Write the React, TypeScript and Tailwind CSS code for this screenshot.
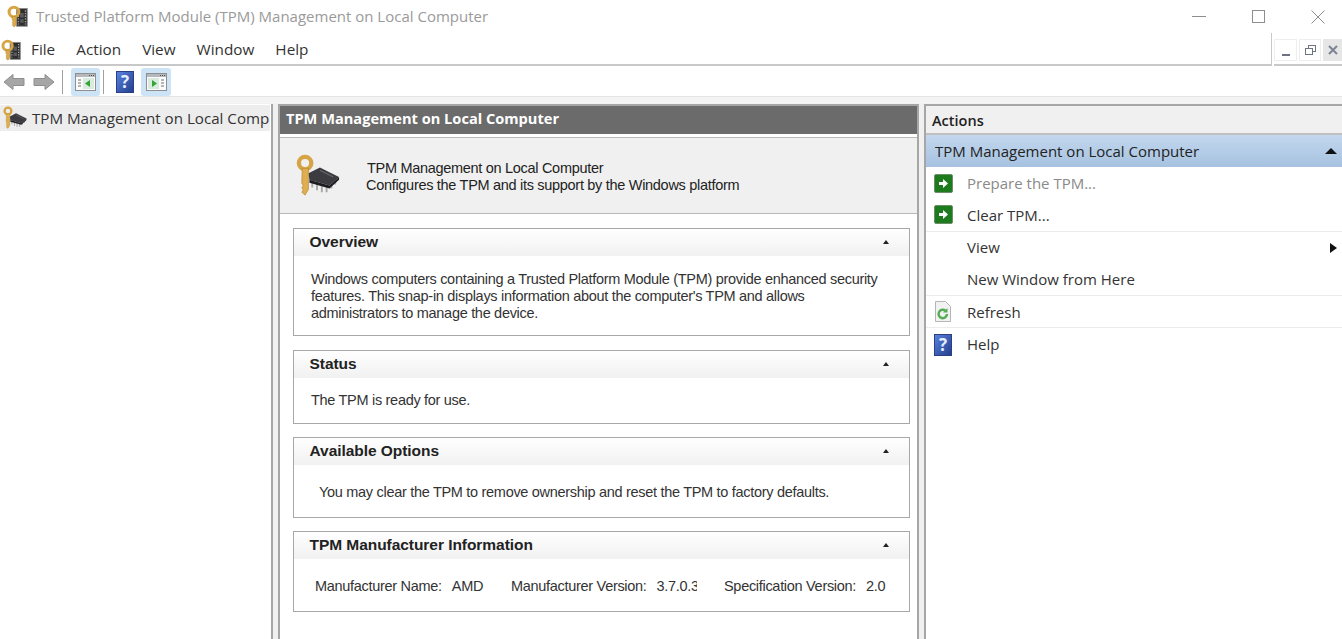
import { ReactNode } from 'react';

// key in front of the dark film strip (title bar and menu bar)
function TitleIcon({ size = 24 }: { size?: number }) {
  return (
    <svg width={size} height={size} viewBox="0 0 24 26" className="shrink-0">
      <rect x="11" y="4" width="12" height="20" fill="#2f2f2f" stroke="#8b8b8b" />
      <path d="M13 6v16M21 6v16" stroke="#a5a5a5" strokeWidth="1.500" strokeDasharray="1.500 1.500" />
      <path d="M15 9h4v5h-4zM15 16h4v4h-4z" fill="#5b5b5b" />
      <circle cx="8" cy="8" r="5.500" fill="none" stroke="#d8a544" strokeWidth="3.500" />
      <path d="M6 13h4.500v9l-2 3-2.500-2 1-1.500-1-1.500 1-1.500-1-1.500z" fill="#dcaa4a" stroke="#a97f2c" strokeWidth="0.500" />
    </svg>
  );
}

// key in front of the chip (tree row and description)
function ChipKeyIcon({ size = 24 }: { size?: number }) {
  return (
    <svg width={size} height={size} viewBox="0 0 46 46" className="shrink-0">
      <path d="M17 27v8M22 29v9M27 31v9M32 33v7M37 31v5M41 28v4" stroke="#a8a8a8" strokeWidth="2" />
      <path d="M13 20 L25 14 L45 24 L35 33 L14 27 Z" fill="#3b3b40" />
      <path d="M14 27 L35 33 L45 24 L45 27 L35 36 L14 30 Z" fill="#1e1e22" />
      <path d="M25 17 L39 24" stroke="#66666c" strokeWidth="1.200" />
      <circle cx="9.500" cy="9.500" r="6.500" fill="none" stroke="#d7a445" strokeWidth="4.500" />
      <path d="M6.500 15h6.500v22l-3.500 6-3.500-3 1.500-2.500-1.500-2 1.500-2.500-1.500-2.500z" fill="#dfae4e" stroke="#aa7f2b" strokeWidth="0.600" />
    </svg>
  );
}

function HelpIcon({ className }: { className?: string }) {
  return (
    <div className={`flex items-center justify-center border border-[#2a3f85] bg-gradient-to-br from-[#5a82dc] to-[#24408f] font-bold leading-none text-[#e8eefc] ${className}`}>
      ?
    </div>
  );
}

function ArrowBox() {
  return (
    <div className="flex h-[19px] w-[19px] items-center justify-center rounded-[2px] border border-[#6b8f6b] bg-[#1d7a1d]">
      <svg width="11" height="11" viewBox="0 0 11 11">
        <path d="M1 4h4V1l5 4.500-5 4.500V7H1z" fill="#fff" />
      </svg>
    </div>
  );
}

function PaneIcon({ dir }: { dir: 'left' | 'right' }) {
  return (
    <svg width="21" height="21" viewBox="0 0 21 21">
      <rect x=".5" y="2.500" width="20" height="17" fill="#fbfbfb" stroke="#8f8f8f" />
      <rect x="1" y="3" width="19" height="3" fill="#b5b8bd" />
      <path d="M14 4.500h1M16 4.500h1M18 4.500h1" stroke="#555" />
      {dir === 'left' ? (
        <>
          <path d="M3 9h3M3 12h3M3 15h3" stroke="#707070" />
          <rect x="8" y="7" width="11" height="11" fill="#d9eadf" />
          <path d="M15 9v7l-5-3.500z" fill="#35a335" />
        </>
      ) : (
        <>
          <path d="M15 9h3M15 12h3M15 15h3" stroke="#707070" />
          <rect x="2" y="7" width="11" height="11" fill="#d9eadf" />
          <path d="M6 9v7l5-3.500z" fill="#35a335" />
        </>
      )}
    </svg>
  );
}

function NavArrow({ flip }: { flip?: boolean }) {
  return (
    <svg width="22" height="18" viewBox="0 0 22 18" className={flip ? '-scale-x-100' : ''}>
      <path d="M1 9 L10 1.500 V5.500 H21 V12.500 H10 V16.500 Z" fill="#a6a6a6" stroke="#8f8f8f" />
    </svg>
  );
}

function Card({ title, children, className }: { title: string; children: ReactNode; className?: string }) {
  return (
    <section className={`border border-[#a8a8a8] bg-white ${className}`}>
      <div className="flex h-[27px] items-center justify-between bg-gradient-to-b from-white to-[#f1f1f1] pb-[2px] pl-[15.500px] pr-[20px]">
        <h2 className="text-[15.500px] font-bold tracking-[-0.05px] text-[#222]">{title}</h2>
        <div className="h-0 w-0 border-x-[3.500px] border-b-[4px] border-x-transparent border-b-[#222]" />
      </div>
      {children}
    </section>
  );
}

function ActionRow({ icon, label, muted, line, arrow }: { icon?: ReactNode; label: string; muted?: boolean; line?: boolean; arrow?: boolean }) {
  return (
    <div className={`flex h-[32.300px] items-center ${line ? 'border-b border-[#ececec]' : ''}`}>
      <div className="flex w-[41px] shrink-0 justify-start pl-[8px]">{icon}</div>
      <span className={`text-[15px] ${muted ? 'text-[#8a8a8a]' : 'text-[#333]'}`}>{label}</span>
      {arrow && <div className="ml-auto mr-[5px] h-0 w-0 border-y-[5.500px] border-l-[7px] border-y-transparent border-l-[#111]" />}
    </div>
  );
}

function Info({ label, value, clip, className }: { label: string; value: string; clip?: boolean; className?: string }) {
  return (
    <span className={`flex ${className}`}>
      <span>{label}</span>
      <span className={`ml-[10px] ${clip ? 'w-[40px] overflow-hidden' : ''}`}>{value}</span>
    </span>
  );
}

export default function App() {
  const menus = ['File', 'Action', 'View', 'Window', 'Help'];

  return (
    <div className="flex h-[639px] w-[1342px] flex-col overflow-hidden bg-white font-['Open_Sans','Noto_Sans',sans-serif] text-[#333]">
      {/* title bar */}
      <header className="flex h-[33px] shrink-0 items-center pl-[6px]">
        <TitleIcon size={23} />
        <span className="ml-[7px] text-[15px] text-[#9a9a9a]">Trusted Platform Module (TPM) Management on Local Computer</span>
        <div className="ml-auto flex items-center gap-[46px] pr-[17px]">
          <div className="h-px w-[14px] bg-[#8e8e8e]" />
          <div className="h-[13px] w-[13px] border border-[#8e8e8e]" />
          <svg width="14" height="14" viewBox="0 0 14 14">
            <path d="M.500.500l13 13M13.500.500l-13 13" stroke="#8e8e8e" />
          </svg>
        </div>
      </header>

      {/* menu bar */}
      <nav className="flex h-[33px] shrink-0 items-center">
        <div className="flex h-full flex-1 items-center border-b-2 border-r border-[#c8c8c8] pt-[2px]">
          <TitleIcon size={22} />
          <ul className="ml-[9px] flex gap-[21px] text-[15.300px]">
            {menus.map(m => (
              <li key={m}>{m}</li>
            ))}
          </ul>
        </div>
        <div className="ml-[2px] flex h-[calc(100%-3px)] items-center gap-[2px] self-end border-b-2 border-[#c8c8c8]">
          <div className="flex h-[22px] w-[23px] items-end justify-center border border-[#eee] pb-[4px]">
            <div className="h-[2px] w-[8px] bg-[#6d7480]" />
          </div>
          <div className="flex h-[22px] w-[22px] items-center justify-center border border-[#eee]">
            <svg width="11" height="11" viewBox="0 0 11 11" fill="none" stroke="#6d7480">
              <rect x="3.500" y=".500" width="7" height="6" />
              <rect x=".500" y="3.500" width="7" height="6" fill="#fff" />
            </svg>
          </div>
          <div className="flex h-[22px] w-[19px] items-center justify-center bg-[#e6e6e6]">
            <svg width="10" height="10" viewBox="0 0 10 10">
              <path d="M1 1l8 8M9 1l-8 8" stroke="#7b8494" strokeWidth="2" />
            </svg>
          </div>
        </div>
      </nav>

      {/* toolbar */}
      <div className="flex h-[30px] shrink-0 items-center pl-[3px] pt-[1px]">
        <NavArrow />
        <div className="ml-[8px]">
          <NavArrow flip />
        </div>
        <div className="ml-[7px] h-[24px] w-px bg-[#a0a0a0]" />
        <div className="ml-[8px] flex h-[28px] w-[29px] items-center justify-center rounded-[3px] bg-[#cde4f7]">
          <PaneIcon dir="left" />
        </div>
        <div className="ml-[3px] h-[24px] w-px bg-[#a0a0a0]" />
        <HelpIcon className="ml-[12px] h-[22px] w-[18px] text-[17px]" />
        <div className="ml-[7px] flex h-[28px] w-[30px] items-center justify-center rounded-[3px] bg-[#cde4f7]">
          <PaneIcon dir="right" />
        </div>
      </div>

      <div className="h-[8px] shrink-0 border-t border-[#e4e4e4] bg-[#f3f3f3]" />

      {/* panes */}
      <main className="flex min-h-0 flex-1 bg-[#f0f0f0]">
        <aside className="w-[273px] shrink-0 overflow-hidden border-r-2 border-[#a6a6a6] bg-white pt-[1px]">
          <div className="flex h-[26px] w-[270px] items-center gap-[5px] overflow-hidden whitespace-nowrap bg-[#ededed] pl-[3px] text-[15.150px]">
            <ChipKeyIcon size={24} />
            <span>TPM Management on Local Comp</span>
          </div>
        </aside>

        <div className="ml-[5px] flex w-[641px] shrink-0 flex-col border-x-2 border-t-2 border-[#a6a6a6] bg-white">
          <div className="flex h-[28px] shrink-0 items-center bg-[#6b6b6b] pb-[2px] pl-[6px] text-[14.600px] font-bold text-white">
            TPM Management on Local Computer
          </div>
          <div className="mt-[3px] flex h-[77px] shrink-0 items-center border-y border-[#b8b8b8] bg-[#f0f0f0] pl-[16px] font-['Liberation_Sans',sans-serif] text-[14.500px] leading-[17px] tracking-[-0.3px] text-[#222]">
            <ChipKeyIcon size={44} />
            <div className="ml-[26px] pt-[2px]">
              <p className="pl-px">TPM Management on Local Computer</p>
              <p>Configures the TPM and its support by the Windows platform</p>
            </div>
          </div>

          <div className="flex flex-col pl-[13px] pr-[7px] pt-[14px] font-['Liberation_Sans',sans-serif] text-[14.500px] tracking-[-0.3px] text-[#333]">
            <Card title="Overview">
              <p className="h-[79px] pl-[17px] pr-[20px] pt-[15px] leading-[17px]">
                Windows computers containing a Trusted Platform Module (TPM) provide enhanced security
                <br />
                features. This snap-in displays information about the computer's TPM and allows
                <br />
                administrators to manage the device.
              </p>
            </Card>
            <Card title="Status" className="mt-[14px]">
              <p className="h-[45px] pl-[17px] pt-[12px]">The TPM is ready for use.</p>
            </Card>
            <Card title="Available Options" className="mt-[13px]">
              <p className="h-[52px] pl-[25px] pt-[17px]">You may clear the TPM to remove ownership and reset the TPM to factory defaults.</p>
            </Card>
            <Card title="TPM Manufacturer Information" className="mt-[13px]">
              <div className="flex h-[52px] items-start whitespace-nowrap pl-[21px] pt-[17px]">
                <Info label="Manufacturer Name:" value="AMD" className="w-[196px]" />
                <Info label="Manufacturer Version:" value="3.7.0.3" clip className="w-[213px]" />
                <Info label="Specification Version:" value="2.0" />
              </div>
            </Card>
          </div>
        </div>

        <div className="ml-[5px] flex min-w-0 flex-1 flex-col border-l-2 border-t-2 border-[#a6a6a6] bg-white">
          <div className="flex h-[29px] shrink-0 items-center border-b-2 border-[#c0c0c0] bg-[#f0f0f0] pl-[6px] pt-[2px] text-[14.500px] font-semibold text-[#222]">
            Actions
          </div>
          <div className="flex h-[32px] shrink-0 items-center justify-between bg-gradient-to-b from-[#c3d7ee] to-[#a6c2e0] pl-[9px] pr-[5px] text-[15px] text-[#222]">
            <span>TPM Management on Local Computer</span>
            <div className="h-0 w-0 border-x-[6px] border-b-[6px] border-x-transparent border-b-[#111]" />
          </div>
          <div>
            <ActionRow icon={<ArrowBox />} label="Prepare the TPM..." muted />
            <ActionRow icon={<ArrowBox />} label="Clear TPM..." line />
            <ActionRow label="View" arrow />
            <ActionRow label="New Window from Here" line />
            <ActionRow
              label="Refresh"
              line
              icon={
                <svg width="18" height="21" viewBox="0 0 18 21">
                  <path d="M1.500.500h10l5 5v15h-15z" fill="#f2f2f2" stroke="#b5b5b5" />
                  <path d="M13 13a4.200 4.200 0 1 1-1.500-3.300" fill="none" stroke="#55ad55" strokeWidth="2.500" />
                  <path d="M13.500 7v4.500h-4.500z" fill="#55ad55" />
                </svg>
              }
            />
            <ActionRow label="Help" icon={<HelpIcon className="h-[22px] w-[18px] text-[17px]" />} />
          </div>
        </div>
      </main>
    </div>
  );
}
